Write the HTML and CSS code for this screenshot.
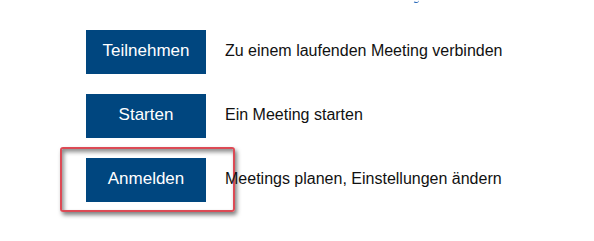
FILE: index.html
```html
<!DOCTYPE html>
<html lang="de">
<head>
    <meta charset="UTF-8">
    <title>Meeting</title>
    <link rel="stylesheet" href="styles.css">
</head>
<body>

    <div class="top-bar">
        <!-- only the tail of the link above is visible -->
        <span class="top-link-tail"></span>
    </div>

    <div class="actions">
        <div class="action-row">
            <a class="action-btn" href="#">Teilnehmen</a>
            <span class="action-text">Zu einem laufenden Meeting verbinden</span>
        </div>

        <div class="action-row">
            <a class="action-btn" href="#">Starten</a>
            <span class="action-text">Ein Meeting starten</span>
        </div>

        <div class="action-row">
            <!-- red annotation frame around the button -->
            <div class="highlight-frame"></div>
            <a class="action-btn" href="#">Anmelden</a>
            <span class="action-text">Meetings planen, Einstellungen ändern</span>
        </div>
    </div>

</body>
</html>
```

FILE: styles.css
```css
body {
    margin: 0;
    background: #ffffff;
    font-family: "Liberation Sans", Arial, sans-serif;
    color: #111;
    height: 241px;
}

.top-bar {
    height: 4px;
    display: flex;
}

.top-link-tail {
    margin-left: 413px;
    width: 5px;
    height: 2px;
    border-bottom: 1.5px solid #1a5fb4;
    border-left: 1px solid transparent;
    border-radius: 0 0 3px 3px;
}

.actions {
    display: flex;
    flex-direction: column;
    gap: 20px;
    padding-top: 26px;
    padding-left: 86px;
    padding-bottom: 20px;
}

.action-row {
    display: flex;
    align-items: center;
    gap: 19px;
    position: relative;
}

.action-btn {
    width: 120px;
    height: 44px;
    background: #00467f;
    color: #ffffff;
    font-size: 17px;
    line-height: 42px;
    text-align: center;
    text-decoration: none;
    position: relative;
    z-index: 1;
}

.action-text {
    font-size: 16px;
    color: #111;
    position: relative;
    z-index: 1;
    padding-bottom: 2px;
}

.highlight-frame {
    position: absolute;
    left: -26px;
    top: -11px;
    width: 171px;
    height: 61px;
    border: 2px solid #dc4a55;
    border-radius: 3px;
    box-shadow: 2px 3px 4px rgba(0, 0, 0, 0.5), inset 2px 3px 4px rgba(0, 0, 0, 0.45);
}
```
